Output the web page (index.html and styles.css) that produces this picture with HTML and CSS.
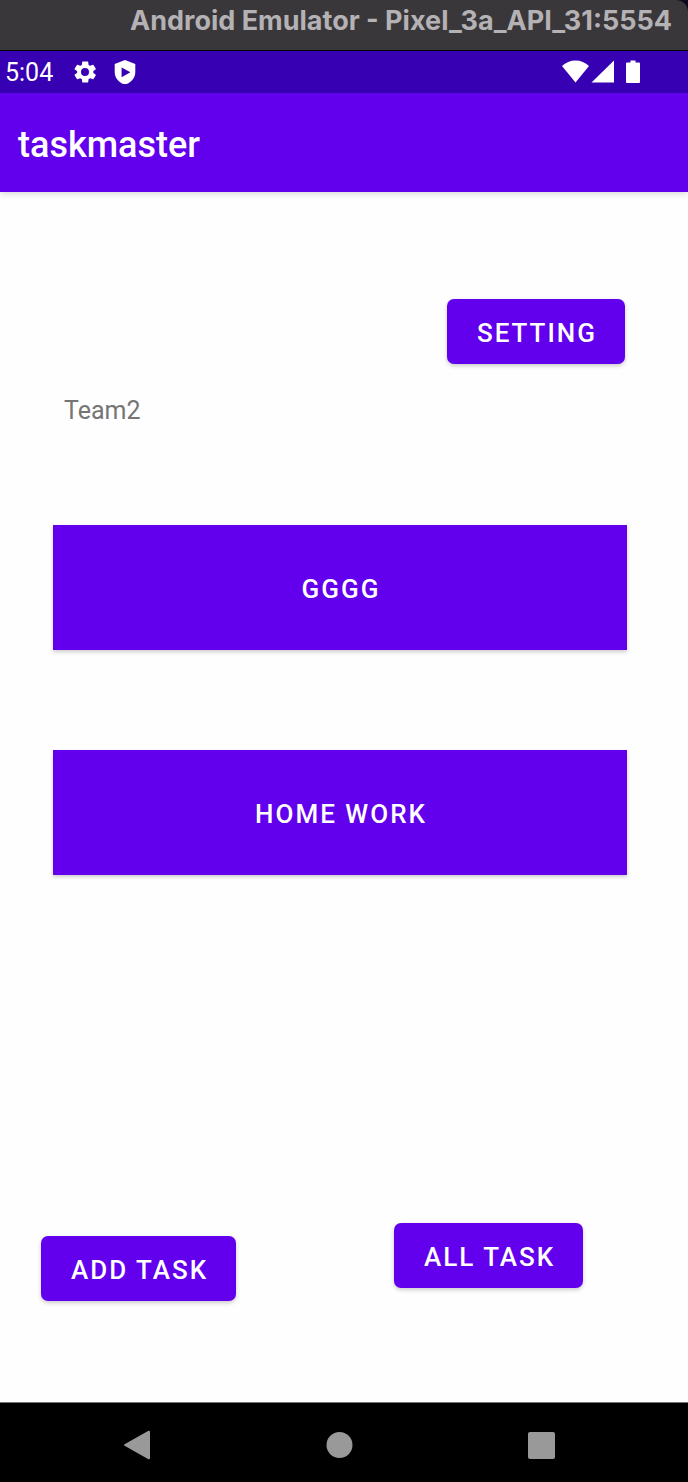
FILE: index.html
```html
<!DOCTYPE html>
<html lang="en">
<head>
<meta charset="utf-8">
<meta name="viewport" content="width=device-width, initial-scale=1">
<title>taskmaster</title>
<link rel="stylesheet" href="styles.css">
</head>
<body>
<div class="window-bar"><div class="window-title">Android Emulator - Pixel_3a_API_31:5554</div></div>
<div class="status-bar">
  <div class="status-left">
    <time class="clock">5:04</time>
    <svg class="icon" viewBox="0 0 24 24" aria-hidden="true"><path fill-rule="evenodd" d="M20.3 12.9a8 8 0 0 0 0-1.8l2.3-1.7a.6.6 0 0 0 .1-.8l-2.2-3.7a.6.6 0 0 0-.7-.2l-2.6 1.1a8 8 0 0 0-1.6-.9L15.2 2.1a.6.6 0 0 0-.6-.5H9.8a.6.6 0 0 0-.6.5L8.8 4.9a8 8 0 0 0-1.6.9L4.600 4.700a.6.6 0 0 0-.7.2L1.700 8.600a.6.6 0 0 0 .1.8l2.300 1.700a8 8 0 0 0 0 1.800l-2.300 1.700a.6.6 0 0 0-.1.8l2.200 3.700a.6.6 0 0 0 .7.2l2.600-1.100a8 8 0 0 0 1.600.9l.4 2.800a.6.6 0 0 0 .6.5h4.800a.6.6 0 0 0 .6-.5l.4-2.800a8 8 0 0 0 1.600-.9l2.600 1.100a.6.6 0 0 0 .7-.2l2.200-3.700a.6.6 0 0 0-.1-.8zM12 16a4 4 0 1 1 0-8 4 4 0 0 1 0 8z"/></svg>
    <svg class="icon" viewBox="0 0 24 24" aria-hidden="true"><path fill-rule="evenodd" d="M12 0 22.300 4V12C22.300 18 18 23 12 24.500 6 23 1.700 18 1.700 12V4zM8.600 7.400V17.200L17.400 12.300z"/></svg>
  </div>
  <div class="status-right">
    <svg class="icon icon-wifi" viewBox="0 0 27 24" aria-hidden="true"><path d="M13.500 22.500 0 6C7-1.500 20-1.500 27 6z"/></svg>
    <svg class="icon" viewBox="0 0 24 24" aria-hidden="true"><path d="M23 .5V22.500H.5z"/></svg>
    <svg class="icon icon-battery" viewBox="0 0 14 24" aria-hidden="true"><path d="M4.500.5h5v2H13a1 1 0 0 1 1 1V22a1 1 0 0 1-1 1H1a1 1 0 0 1-1-1V3.500a1 1 0 0 1 1-1h3.500z"/></svg>
  </div>
</div>
<header class="app-bar"><h1 class="app-title">taskmaster</h1></header>
<main class="content">
  <div class="toolbar"><button class="button" type="button">SETTING</button></div>
  <p class="team">Team2</p>
  <div class="tasks">
    <button class="button task" type="button">GGGG</button>
    <button class="button task" type="button">HOME WORK</button>
  </div>
  <div class="actions">
    <div class="action-add"><button class="button" type="button">ADD TASK</button></div>
    <div class="action-all"><button class="button" type="button">ALL TASK</button></div>
  </div>
</main>
<nav class="nav-bar" aria-label="System">
  <button class="nav-button" type="button" aria-label="Back"><svg class="nav-icon" viewBox="0 0 30 30" aria-hidden="true"><path d="M3 14 26 1Q28 0 28 2V28Q28 30 26 29L3 16Q1 15 3 14z"/></svg></button>
  <button class="nav-button" type="button" aria-label="Home"><svg class="nav-icon" viewBox="0 0 30 30" aria-hidden="true"><circle cx="15.500" cy="15" r="13"/></svg></button>
  <button class="nav-button" type="button" aria-label="Overview"><svg class="nav-icon" viewBox="0 0 30 30" aria-hidden="true"><rect x="2" y="2" width="27" height="27" rx="2"/></svg></button>
</nav>
</body>
</html>
```
FILE: styles.css
```css
* {
  box-sizing: border-box;
}

body {
  display: flex;
  flex-direction: column;
  min-height: 100vh;
  margin: 0;
  background: #fefefe;
  font-family: Roboto, "Liberation Sans", sans-serif;
}

.window-bar {
  background: #0c0b1c;
  border-bottom: 1px solid #000;
}

.window-title {
  padding: 5px 16px 13px;
  border-radius: 0 12px 0 0;
  background: #3a373a;
  color: #b4b2b5;
  font-family: Inter, sans-serif;
  font-size: 27px;
  font-weight: 700;
  line-height: 32px;
  text-align: right;
  white-space: nowrap;
}

.status-bar {
  display: flex;
  align-items: center;
  justify-content: space-between;
  height: 42px;
  padding: 0 48px 0 5px;
  background: #3700b3;
  color: #fff;
}

.status-left {
  display: flex;
  align-items: center;
  gap: 16px;
}

.status-right {
  display: flex;
  align-items: center;
}

.clock {
  padding-top: 2px;
  margin-right: 4px;
  font-size: 25px;
  line-height: 32px;
}

.icon {
  width: 24px;
  height: 24px;
  fill: currentColor;
}

.icon-wifi {
  width: 27px;
  margin-right: 2px;
}

.icon-battery {
  width: 14px;
  margin-left: 11px;
}

.app-bar {
  padding: 30px 18px 25px;
  background: #6200ee;
  box-shadow: 0 2px 6px rgba(0, 0, 0, 0.15);
  color: #fff;
}

.app-title {
  margin: 0;
  font-size: 36px;
  font-weight: 500;
  line-height: 44px;
}

.content {
  display: flex;
  flex: 1;
  flex-direction: column;
  padding: 107px 61px 101px 53px;
}

.toolbar {
  display: flex;
  justify-content: flex-end;
  padding-right: 2px;
}

.button {
  padding: 18px 28px 15px 30px;
  border: 0;
  border-radius: 7px;
  background: #6200ee;
  box-shadow: 0 2px 4px rgba(0, 0, 0, 0.2);
  color: #fff;
  font: 500 26px/32px Roboto, "Liberation Sans", sans-serif;
  letter-spacing: 2px;
}

.team {
  margin: 31px 0 98px;
  padding-left: 11px;
  color: #757575;
  font-size: 25px;
  line-height: 32px;
}

.tasks {
  display: grid;
  gap: 100px;
}

.task {
  padding: 48px 28px 45px 30px;
  border-radius: 0;
}

.actions {
  display: grid;
  grid-template-columns: 353px 1fr;
  margin-top: auto;
  margin-left: -12px;
}

.action-add {
  padding-top: 13px;
}

.nav-bar {
  display: grid;
  grid-template-columns: repeat(3, 1fr);
  height: 80px;
  padding: 4px 46px 0 36px;
  border-top: 1px solid #777;
  background: #000;
}

.nav-button {
  display: flex;
  align-items: center;
  justify-content: center;
  padding: 0;
  border: 0;
  background: none;
}

.nav-icon {
  width: 30px;
  height: 30px;
  fill: #999;
}
```
